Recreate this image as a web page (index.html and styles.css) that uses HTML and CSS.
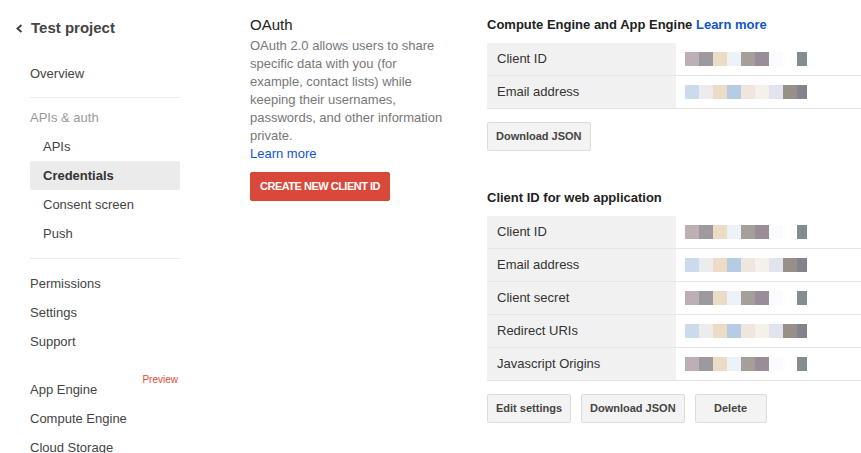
FILE: index.html
```html
<!DOCTYPE html>
<html lang="en">
<head>
<meta charset="utf-8">
<title>Credentials - Test project</title>
<link rel="stylesheet" href="styles.css">
</head>
<body>
<div class="page">
  <aside class="sidebar">
    <div class="project">
      <svg class="chevron" width="7" height="9" viewBox="0 0 7 9"><polyline points="5.5,1 1.5,4.5 5.5,8" fill="none" stroke="#444" stroke-width="2"/></svg>
      <span>Test project</span>
    </div>
    <nav class="nav">
      <div class="item">Overview</div>
      <div class="divider"></div>
      <div class="item group">APIs &amp; auth</div>
      <div class="item sub">APIs</div>
      <div class="item sub active">Credentials</div>
      <div class="item sub">Consent screen</div>
      <div class="item sub">Push</div>
      <div class="divider wide"></div>
      <div class="item">Permissions</div>
      <div class="item">Settings</div>
      <div class="item">Support</div>
      <div class="item spaced">App Engine<span class="badge">Preview</span></div>
      <div class="item">Compute Engine</div>
      <div class="item">Cloud Storage</div>
    </nav>
  </aside>

  <section class="intro">
    <h1 class="intro-title">OAuth</h1>
    <p class="intro-text">OAuth 2.0 allows users to share specific data with you (for example, contact lists) while keeping their usernames, passwords, and other information private.<br><a class="link" href="#">Learn more</a></p>
    <button class="btn-primary">CREATE NEW CLIENT ID</button>
  </section>

  <main class="details">
    <div class="block">
      <h2 class="block-title">Compute Engine and App Engine <a class="link" href="#">Learn more</a></h2>
      <div class="table">
        <div class="row"><div class="label">Client ID</div><div class="value"><span class="redact redact-a"></span></div></div>
        <div class="row"><div class="label">Email address</div><div class="value"><span class="redact redact-b"></span></div></div>
      </div>
      <div class="actions"><button class="btn">Download JSON</button></div>
    </div>

    <div class="block second">
      <h2 class="block-title">Client ID for web application</h2>
      <div class="table">
        <div class="row"><div class="label">Client ID</div><div class="value"><span class="redact redact-a"></span></div></div>
        <div class="row"><div class="label">Email address</div><div class="value"><span class="redact redact-b"></span></div></div>
        <div class="row"><div class="label">Client secret</div><div class="value"><span class="redact redact-a"></span></div></div>
        <div class="row"><div class="label">Redirect URIs</div><div class="value"><span class="redact redact-b"></span></div></div>
        <div class="row"><div class="label">Javascript Origins</div><div class="value"><span class="redact redact-a"></span></div></div>
      </div>
      <div class="actions">
        <button class="btn">Edit settings</button>
        <button class="btn">Download JSON</button>
        <button class="btn">Delete</button>
      </div>
    </div>
  </main>
</div>
</body>
</html>
```

FILE: styles.css
```css
* { box-sizing: border-box; }
html, body {
  margin: 0;
  padding: 0;
  background: #fff;
}
body {
  font-family: "Liberation Sans", Arial, sans-serif;
  font-size: 13px;
  color: #444;
  overflow: hidden;
}
.page {
  display: flex;
  align-items: flex-start;
  width: 861px;
  height: 453px;
  overflow: hidden;
}

/* Sidebar */
.sidebar {
  width: 180px;
  flex: none;
}
.project {
  display: flex;
  align-items: center;
  gap: 8px;
  padding: 18px 0 0 16px;
  height: 38px;
  line-height: 20px;
  font-size: 15px;
  font-weight: bold;
  color: #444;
}
.chevron { display: block; margin-top: 1px; }
.nav {
  margin: 21px 0 0 30px;
  width: 150px;
}
.item {
  position: relative;
  height: 29px;
  line-height: 29px;
  color: #444;
  white-space: nowrap;
}
.item.group { color: #999; }
.item.sub { padding-left: 13px; }
.item.active {
  background: #ebebeb;
  border-radius: 2px;
  font-weight: bold;
  color: #333;
}
.item.spaced { margin-top: 19px; }
.divider {
  height: 1px;
  background: #ebebeb;
  margin: 9px 0 5px;
}
.divider.wide { margin: 10px 0 10px; }
.badge {
  position: absolute;
  right: 2px;
  top: -1px;
  font-size: 10px;
  line-height: 12px;
  color: #dd4b39;
}

/* Intro column */
.intro {
  width: 200px;
  flex: none;
  margin-left: 70px;
  padding-top: 15px;
}
.intro-title {
  margin: 0;
  font-size: 15px;
  line-height: 20px;
  font-weight: normal;
  color: #222;
}
.intro-text {
  margin: 2px 0 0;
  font-size: 13px;
  line-height: 18px;
  color: #777;
}
.link {
  color: #15c;
  text-decoration: none;
}
.btn-primary {
  display: block;
  margin-top: 9px;
  width: 140px;
  height: 29px;
  padding: 0;
  border: 1px solid #d14836;
  border-radius: 2px;
  background: #d9483a;
  color: #fff;
  font-family: "Liberation Sans", Arial, sans-serif;
  font-size: 11px;
  font-weight: bold;
  letter-spacing: -0.5px;
  line-height: 27px;
  text-align: center;
}

/* Details column */
.details {
  flex: 1;
  margin-left: 37px;
  padding-top: 16px;
}
.block.second { margin-top: 38px; }
.block-title {
  margin: 0 0 9px;
  font-size: 13px;
  line-height: 18px;
  font-weight: bold;
  color: #222;
}
.table { display: flex; flex-direction: column; }
.row {
  display: grid;
  grid-template-columns: 189px 1fr;
  height: 33px;
  border-bottom: 1px solid #e5e5e5;
}
.label {
  background: #f1f1f1;
  padding-left: 10px;
  line-height: 32px;
  color: #333;
}
.value {
  display: flex;
  align-items: center;
  padding-left: 9px;
}
.redact {
  display: block;
  width: 122px;
  height: 14px;
}
.redact-a {
  background: linear-gradient(to right,
    #bcb0b5 0 14px, #9c9a9f 14px 28px, #ecdcc6 28px 42px, #edf1f8 42px 56px,
    #a59f9a 56px 70px, #9a8d98 70px 84px, #fafbff 84px 98px, #fff 98px 112px,
    #818d8f 112px 122px);
}
.redact-b {
  background: linear-gradient(to right,
    #c9dbed 0 14px, #ececec 14px 28px, #ecdcc6 28px 42px, #b4cde4 42px 56px,
    #efe6e0 56px 70px, #f4f1ea 70px 84px, #e1e4ef 84px 98px, #978f88 98px 112px,
    #82838d 112px 122px);
}
.actions {
  display: flex;
  gap: 10px;
  margin-top: 13px;
}
.btn {
  height: 29px;
  min-width: 72px;
  padding: 0 8px;
  border: 1px solid #dcdcdc;
  border-radius: 2px;
  background: #f3f3f3;
  color: #444;
  font-family: "Liberation Sans", Arial, sans-serif;
  font-size: 11px;
  font-weight: bold;
  line-height: 27px;
  text-align: center;
}
```
